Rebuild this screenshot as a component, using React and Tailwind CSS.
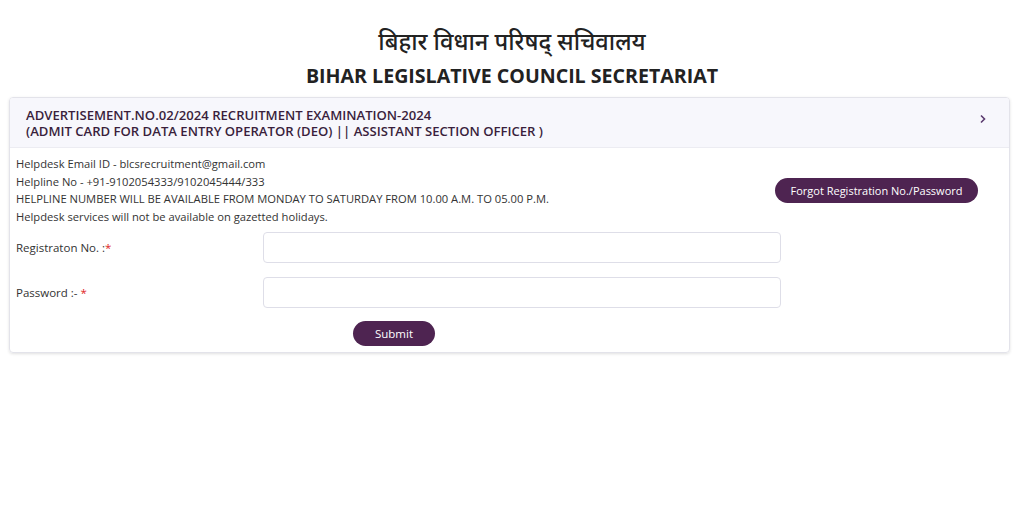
import React from "react";

export default function App() {
  return (
    <div className="min-h-[521px] bg-white text-[#212529]" style={{ fontFamily: '"Open Sans", "Noto Sans", sans-serif' }}>
      <div className="pt-[28px] text-center">
        <h1 className="text-[23.6px] leading-[34px] font-medium text-[#222]" style={{ fontFamily: '"Noto Sans Devanagari", "Noto Sans", "Open Sans", sans-serif' }}>
          बिहार विधान परिषद् सचिवालय
        </h1>
        <h2 className="text-[19.6px] leading-[28px] font-bold text-[#222]">BIHAR LEGISLATIVE COUNCIL SECRETARIAT</h2>
      </div>
      <div className="px-[9px] pt-[7px]">
        <div className="w-[1001px] border border-[#e3e3ea] rounded-[4px] shadow-[0_1px_3px_rgba(0,0,0,0.12)] overflow-hidden">
          <div className="flex items-center justify-between bg-[#f7f7fc] border-b border-[#ececf2] pl-[16px] pr-[22px] pt-[9px] pb-[8px]">
            <div className="text-[13.1px] leading-[16px] font-semibold text-[#3a1f3c]">
              <div>ADVERTISEMENT.NO.02/2024 RECRUITMENT EXAMINATION-2024</div>
              <div>(ADMIT CARD FOR DATA ENTRY OPERATOR (DEO) || ASSISTANT SECTION OFFICER )</div>
            </div>
            <svg width="8" height="10" viewBox="0 0 8 10" className="mb-[8px]">
              <path d="M2 1.5 L5.5 5 L2 8.5" fill="none" stroke="#5a3a6e" strokeWidth="1.6" />
            </svg>
          </div>
          <div className="px-[6px] pt-[7px] pb-[6px]">
            <div className="flex items-center">
              <div className="text-[11.2px] leading-[17.7px] text-[#333] w-[753px]">
                <div>Helpdesk Email ID - blcsrecruitment@gmail.com</div>
                <div>Helpline No - +91-9102054333/9102045444/333</div>
                <div>HELPLINE NUMBER WILL BE AVAILABLE FROM MONDAY TO SATURDAY FROM 10.00 A.M. TO 05.00 P.M.</div>
                <div>Helpdesk services will not be available on gazetted holidays.</div>
              </div>
              <button className="ml-[6px] w-[203px] h-[25px] rounded-full bg-[#4e2451] text-white text-[11px] leading-[25px] text-center">
                Forgot Registration No./Password
              </button>
            </div>
            <div className="mt-[6px] flex flex-col gap-[14px]">
              <div className="flex items-center">
                <label className="w-[247px] text-[11.5px] text-[#333]">
                  Registraton No. :<span className="text-[#e02424]">*</span>
                </label>
                <input className="w-[518px] h-[31px] border border-[#dedee8] rounded-[4px] outline-none px-2" />
              </div>
              <div className="flex items-center">
                <label className="w-[247px] text-[11.5px] text-[#333]">
                  Password :- <span className="text-[#e02424]">*</span>
                </label>
                <input type="password" className="w-[518px] h-[31px] border border-[#dedee8] rounded-[4px] outline-none px-2" />
              </div>
            </div>
            <div className="mt-[12px] pl-[337px]">
              <button className="w-[82px] h-[25px] rounded-full bg-[#4e2451] text-white text-[11.5px] leading-[25px]">Submit</button>
            </div>
          </div>
        </div>
      </div>
    </div>
  );
}
